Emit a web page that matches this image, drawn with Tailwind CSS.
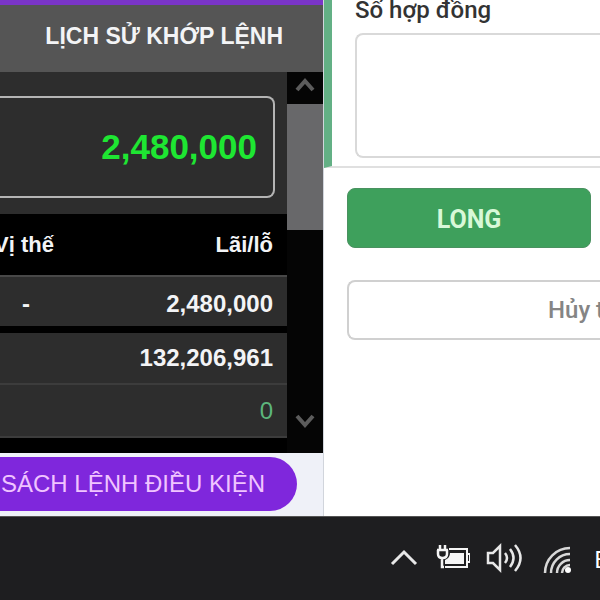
<!DOCTYPE html>
<html lang="vi">
<head>
    <meta charset="UTF-8">
    <meta name="viewport" content="width=device-width, initial-scale=1.0">
    <title>Lịch sử khớp lệnh</title>
    <script src="https://cdn.jsdelivr.net/npm/@tailwindcss/browser@4"></script>
</head>
<body class="h-screen flex flex-col overflow-hidden bg-white font-[Roboto,sans-serif]">
    <main class="flex flex-1 min-h-0">
        <!-- history panel -->
        <section class="w-[54%] flex flex-col shrink-0 overflow-hidden bg-black border-r border-gray-300 font-['Liberation_Sans',sans-serif]">
            <h2 class="h-[72px] flex items-center justify-end pr-10 pb-1 border-t-5 border-[#7a35c8] bg-[#555555] text-[23px] font-bold text-gray-100 whitespace-nowrap">LỊCH SỬ KHỚP LỆNH</h2>
            <div class="flex flex-1 min-h-0">
                <div class="flex-1 min-w-0 overflow-hidden">
                    <div class="bg-[#2d2d2d] pt-6 pb-4 pr-3">
                        <div class="h-[102px] flex items-center justify-end pr-4 rounded-r-lg border-2 border-l-0 border-[#b4b4b4] text-[35px] font-bold text-[#1ee632]">2,480,000</div>
                    </div>
                    <table class="w-full table-fixed text-2xl text-gray-100">
                        <thead class="text-[22px]">
                            <tr class="h-[62px]">
                                <th class="w-[54px] p-0 font-bold whitespace-nowrap"><span class="flex justify-end">Vị thế</span></th>
                                <th class="p-0 pr-[14px] font-bold text-right">Lãi/lỗ</th>
                            </tr>
                        </thead>
                        <tbody>
                            <tr class="h-[50px] bg-[#2d2d2d] border-t-2 border-[#484848]">
                                <td class="p-0 pt-1 pr-6 font-bold text-right">-</td>
                                <td class="p-0 pt-1 pr-[14px] font-bold text-right">2,480,000</td>
                            </tr>
                            <tr class="h-[7px]">
                                <td class="p-0" colspan="2"></td>
                            </tr>
                            <tr class="h-[51px] bg-[#2d2d2d] border-b-2 border-[#3c3c3c]">
                                <td class="p-0 pr-[14px] font-bold text-right" colspan="2">132,206,961</td>
                            </tr>
                            <tr class="h-[53px] bg-[#2d2d2d] border-b-2 border-[#3c3c3c]">
                                <td class="p-0 pr-[14px] text-right text-[#5cb57c]" colspan="2">0</td>
                            </tr>
                        </tbody>
                    </table>
                </div>
                <!-- scrollbar -->
                <div class="w-9 flex flex-col items-center bg-[#050505] pb-4">
                    <svg class="h-8 w-6 shrink-0" viewBox="0 0 24 32" fill="none" stroke="#5c5c5c" stroke-width="4"><path d="M4 18l8-9 8 9"/></svg>
                    <div class="h-[126px] w-full bg-[#68686a]"></div>
                    <svg class="mt-auto h-8 w-6 shrink-0" viewBox="0 0 24 32" fill="none" stroke="#5c5c5c" stroke-width="4"><path d="M4 11l8 9 8-9"/></svg>
                </div>
            </div>
            <div class="h-[63px] flex items-start pt-1 pr-[26px] bg-[#eff1f8]">
                <button class="h-[54px] w-full flex items-center justify-end pr-8 rounded-r-full bg-[#7f27dc] text-2xl text-[#f0c4ff] whitespace-nowrap">SÁCH LỆNH ĐIỀU KIỆN</button>
            </div>
        </section>

        <!-- order form -->
        <form class="flex-1 min-w-0 overflow-hidden">
            <div class="h-[168px] pl-[23px] border-l-8 border-l-[#63b085] border-b-2 border-b-[#e0e0e0]">
                <label class="block h-[33px] leading-5 text-2xl font-medium text-[#333333]" for="contracts">Số hợp đồng</label>
                <input class="h-[125px] w-full px-4 rounded-l-lg border-2 border-r-0 border-[#d9d9d9] text-2xl" type="text" id="contracts">
            </div>
            <div class="pt-5 pl-[23px]">
                <button class="block h-[60px] w-61 pt-1 rounded-lg border border-[#4a9160] bg-[#3ea05c] text-[25px] font-bold text-[#d8f8d8]" type="button">LONG</button>
                <button class="block mt-8 h-[60px] w-full pl-[199px] rounded-l-lg border-2 border-r-0 border-[#d0d0d0] text-left text-2xl font-medium text-[#858585] whitespace-nowrap" type="button">Hủy t</button>
            </div>
        </form>
    </main>

    <!-- taskbar -->
    <footer class="h-21 shrink-0 flex items-center justify-end gap-4 overflow-hidden border-t border-[#555555] bg-[#1e1e20] text-white">
        <svg class="h-8 w-7" viewBox="0 0 28 32" fill="none" stroke="#e8e8e8" stroke-width="3"><path d="M2 21l12-12 12 12"/></svg>
        <svg class="h-9 w-9" viewBox="0 0 36 36" fill="none" stroke="#f5f5f5" stroke-width="2">
            <path d="M6 4v5M11 4v5M3 9h11M4 9v4q0 4 4.500 4t4.500-4V9M8 17v9h2" stroke-width="2.500"/>
            <path d="M15 8h18v18H11"/>
            <path d="M16 12h14v11H11v-4q5-2 5-7z" fill="#f5f5f5" stroke="none"/>
            <path d="M34 13h2v8h-2"/>
        </svg>
        <svg class="h-9 w-9" viewBox="0 0 36 36" fill="none" stroke="#e8e8e8" stroke-width="2.500">
            <path d="M2 12h5l7-7v24l-7-7H2z"/>
            <path d="M19 12q4 5 0 10M24 8q7 9 0 18M29 4q11 13 0 26"/>
        </svg>
        <svg class="h-9 w-9 ml-1" viewBox="0 0 36 36" fill="none" stroke="#d8d8d8" stroke-width="2.500">
            <path d="M3 32A25 25 0 0 1 28 7M9 32A19 19 0 0 1 28 13M15 32A13 13 0 0 1 28 19M20 32A8 8 0 0 1 28 24"/>
            <circle cx="26" cy="29" r="3" fill="#fff" stroke="none"/>
        </svg>
        <span class="w-[6px] font-['Noto_Sans',sans-serif] text-2xl">E</span>
    </footer>
</body>
</html>
